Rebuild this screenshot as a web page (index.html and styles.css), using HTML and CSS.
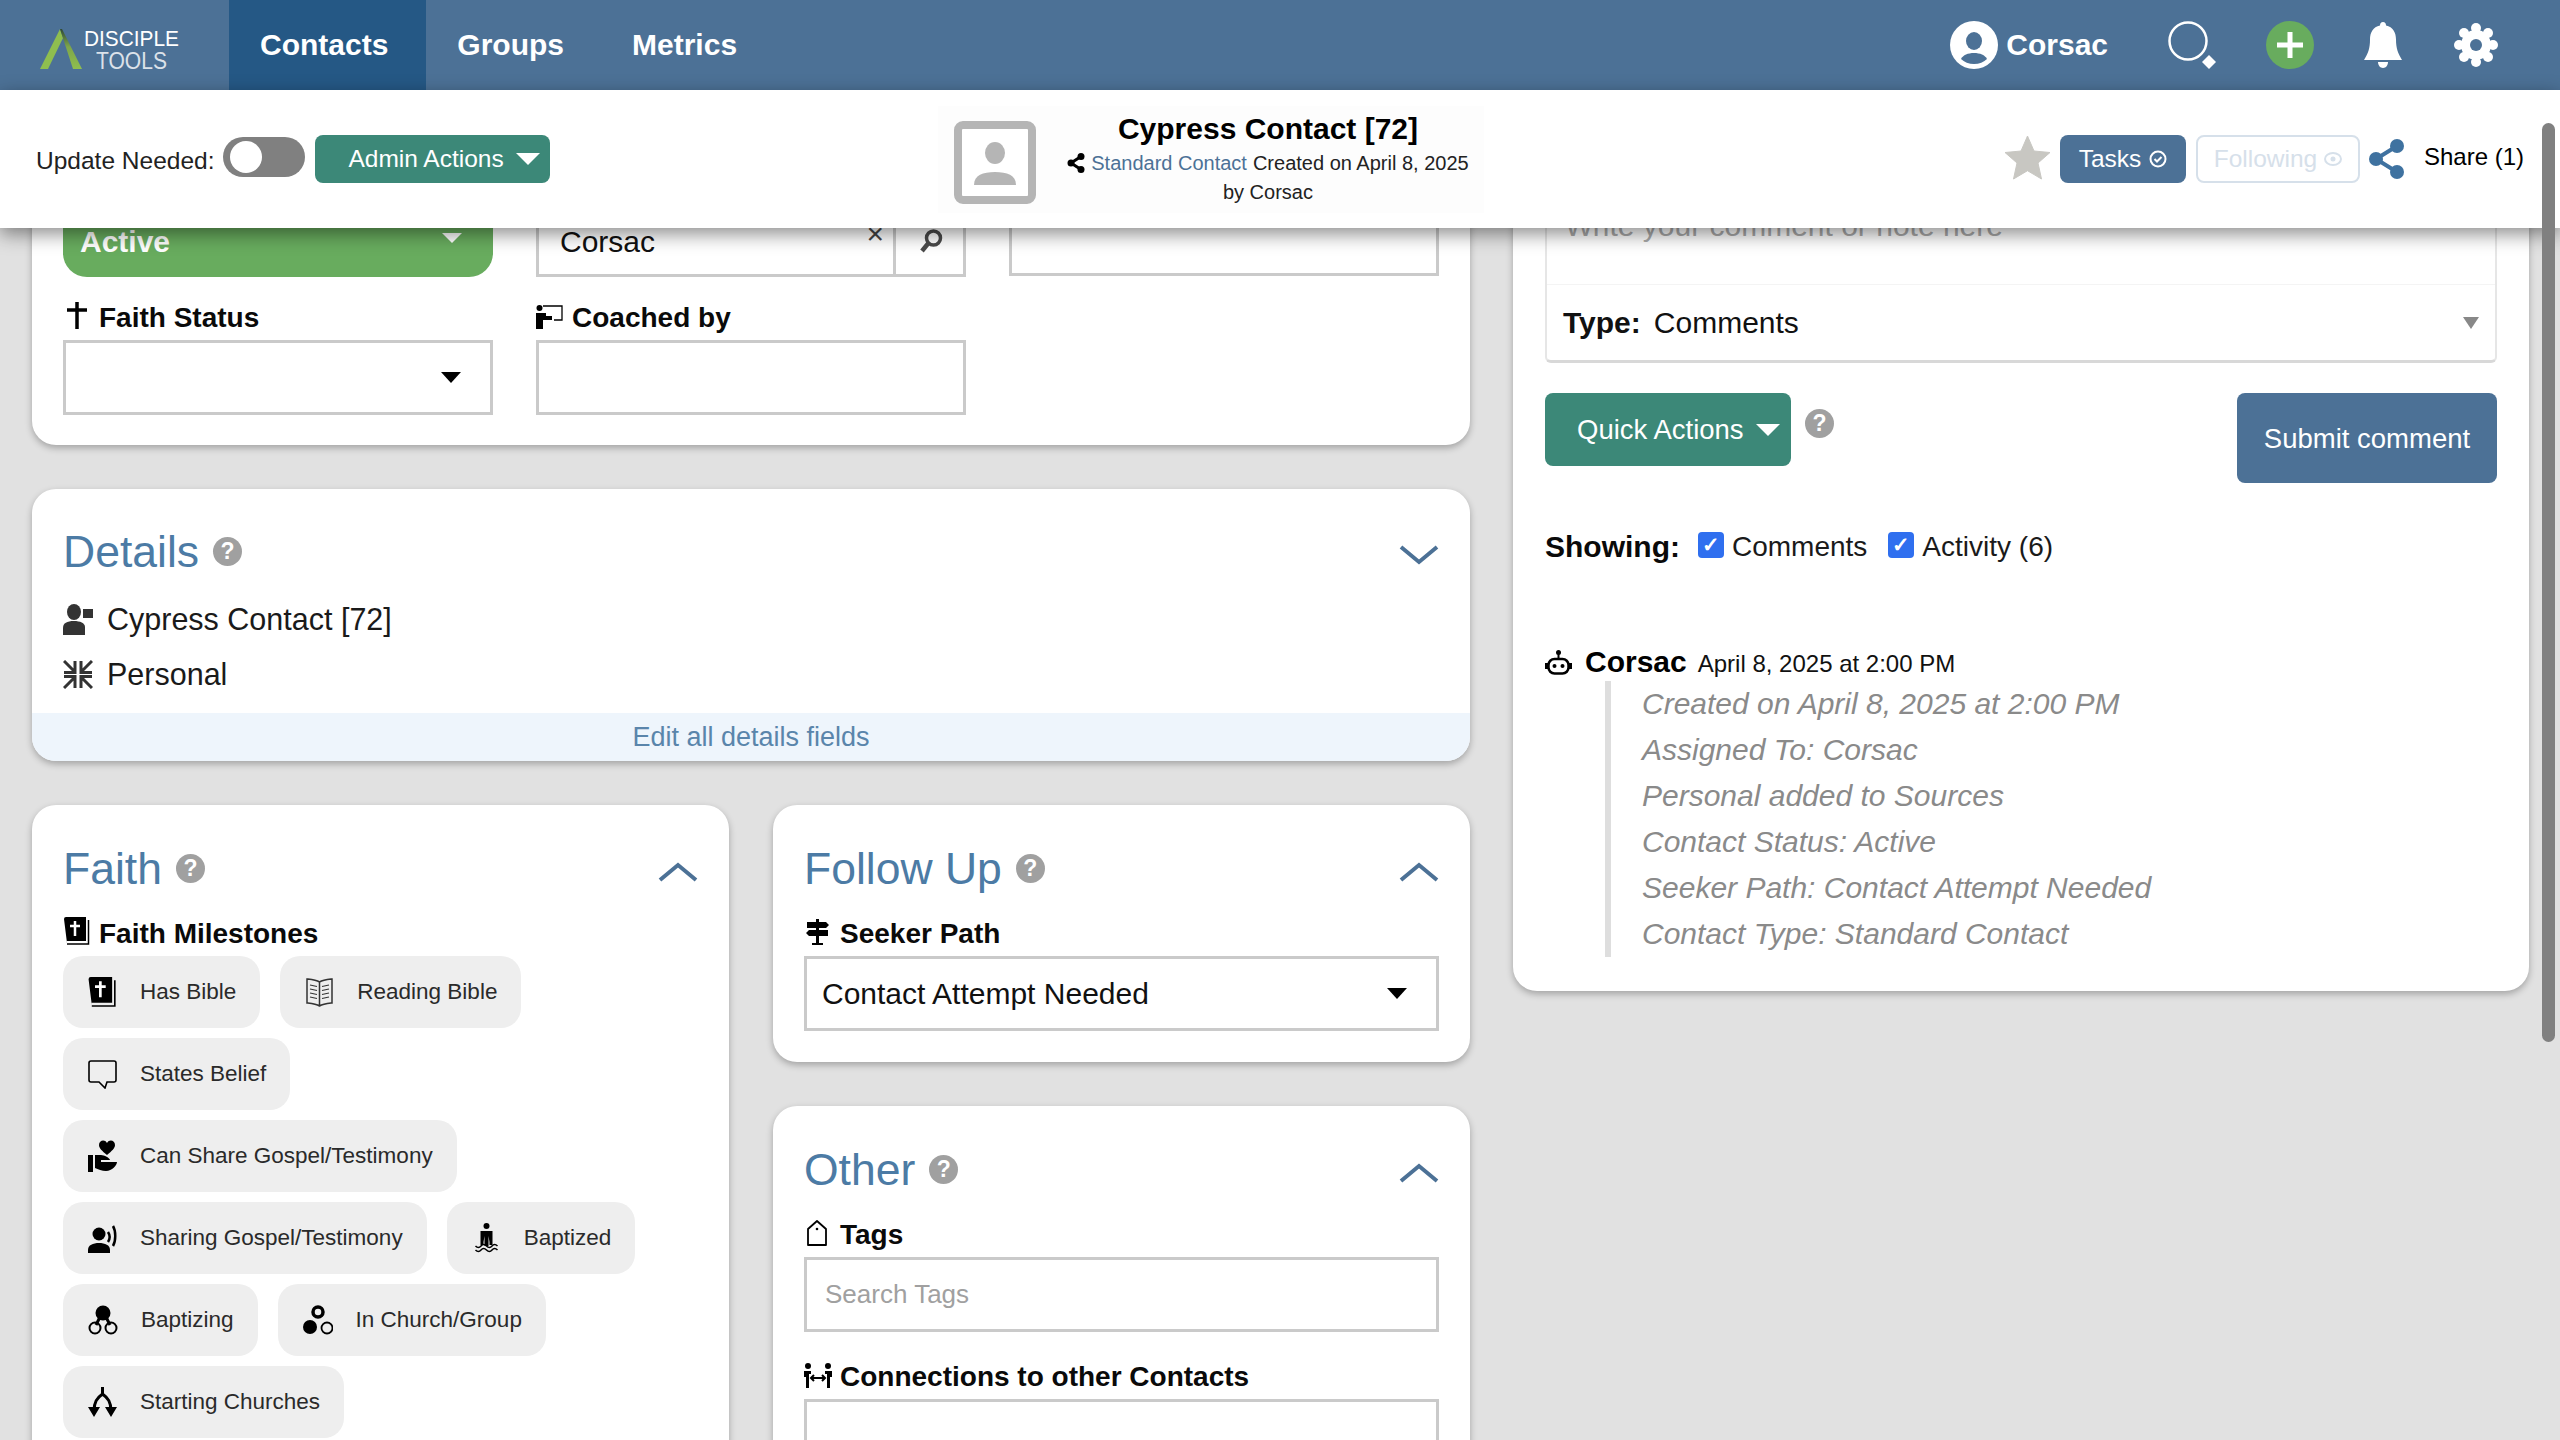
FILE: index.html
```html
<!DOCTYPE html>
<html lang="en">
<head>
  <meta charset="UTF-8" />
  <title>Cypress Contact [72] - Disciple Tools</title>
  <link rel="stylesheet" href="styles.css">
</head>
<body>
<div class="page">

  <!-- Top navigation -->
  <header class="topbar">
    <a class="logo">
      <svg width="150" height="50" viewBox="0 0 150 50">
        <defs>
          <linearGradient id="logo-leg" x1="0" y1="0" x2="0" y2="1">
            <stop offset="0" stop-color="#2f4a35"/>
            <stop offset=".45" stop-color="#7ea64a"/>
            <stop offset="1" stop-color="#8fbe4f"/>
          </linearGradient>
        </defs>
        <polygon points="20,0 0,40 8,40 23,9" fill="#8fbe4f"/>
        <polygon points="20,0 33,40 42,40 22,0" fill="url(#logo-leg)"/>
        <text x="44" y="17" textLength="95" lengthAdjust="spacingAndGlyphs" class="logo-top">DISCIPLE</text>
        <text x="56" y="40" textLength="71" lengthAdjust="spacingAndGlyphs" class="logo-bottom">TOOLS</text>
      </svg>
    </a>
    <nav class="tabs">
      <a class="tab tab-active">Contacts</a>
      <a class="tab">Groups</a>
      <a class="tab">Metrics</a>
    </nav>
    <div class="top-tools">
      <span class="user">
        <svg width="48" height="48" viewBox="0 0 48 48">
          <circle cx="24" cy="24" r="24" fill="#fff"/>
          <ellipse cx="24" cy="20" rx="8" ry="9" fill="#4c7196"/>
          <path d="M11 38c2-4 7-6 13-6s11 2 13 6c-3 3-8 5-13 5s-10-2-13-5z" fill="#4c7196"/>
        </svg>
        <span class="user-name">Corsac</span>
      </span>
      <svg class="tool-search" width="48" height="48" viewBox="0 0 48 48">
        <circle cx="20" cy="20" r="18.500" fill="none" stroke="#fff" stroke-width="2.500"/>
        <polygon points="41,34 48,41 41,48 34,41" fill="#fff"/>
      </svg>
      <svg class="tool-plus" width="48" height="48" viewBox="0 0 48 48">
        <circle cx="24" cy="24" r="24" fill="#68ac5e"/>
        <path d="M24 11v26M11 24h26" stroke="#fff" stroke-width="5"/>
      </svg>
      <svg class="tool-bell" width="38" height="46" viewBox="0 0 38 46">
        <path d="M19 0c2 0 3 1.500 3 3.500 7 1.500 10 7 10 14 0 9 2 14 6 20.500H0c4-6.500 6-11.500 6-20.500 0-7 3-12.500 10-14C16 1.500 17 0 19 0z" fill="#fff"/>
        <path d="M14 40h10c0 3-2 6-5 6s-5-3-5-6z" fill="#fff"/>
      </svg>
      <svg class="tool-gear" width="44" height="44" viewBox="0 0 44 44" fill="#fff">
        <circle cx="22" cy="22" r="15"/>
        <circle cx="22" cy="5" r="5"/><circle cx="22" cy="39" r="5"/>
        <circle cx="5" cy="22" r="5"/><circle cx="39" cy="22" r="5"/>
        <circle cx="10" cy="10" r="5"/><circle cx="34" cy="10" r="5"/>
        <circle cx="10" cy="34" r="5"/><circle cx="34" cy="34" r="5"/>
        <circle cx="22" cy="22" r="6" fill="#4c7196"/>
      </svg>
    </div>
  </header>

  <!-- Record bar -->
  <section class="recordbar">
    <div class="record-left">
      <span class="update-label">Update Needed:</span>
      <span class="toggle"><span class="toggle-knob"></span></span>
      <button class="btn btn-teal btn-admin">Admin Actions <i class="caret caret-white"></i></button>
    </div>
    <div class="record-title">
      <svg class="record-avatar" width="82" height="83" viewBox="0 0 82 83">
        <rect x="4" y="4" width="74" height="75" rx="5" fill="#fff" stroke="#b5b5b5" stroke-width="8"/>
        <ellipse cx="41" cy="32" rx="10" ry="11" fill="#b5b5b5"/>
        <path d="M20 64c0-10 9-13 21-13s21 3 21 13z" fill="#b5b5b5"/>
      </svg>
      <div class="record-text">
        <h1>Cypress Contact [72]</h1>
        <p class="record-sub">
          <svg width="18" height="20" viewBox="0 0 18 20"><path d="M14 3.500 4 10l10 6.500" fill="none" stroke="#000" stroke-width="3"/><circle cx="14" cy="3.500" r="3.500"/><circle cx="4" cy="10" r="3.500"/><circle cx="14" cy="16.500" r="3.500"/></svg>
          <a class="type-link">Standard Contact</a>
          <span>Created on April 8, 2025</span>
        </p>
        <p class="record-by">by Corsac</p>
      </div>
    </div>
    <div class="record-right">
      <svg class="star" width="45" height="45" viewBox="0 0 45 45"><path d="M22.500 0l6.500 15 16 1.500-12 10.500 3.500 16-14-8.300-14 8.300 3.500-16L0 16.500 16 15z" fill="#c8c7c2" stroke="#c8c7c2" stroke-linejoin="round"/></svg>
      <button class="btn btn-blue btn-tasks">Tasks
        <svg width="18" height="18" viewBox="0 0 18 18"><circle cx="9" cy="9" r="7.500" fill="none" stroke="#fff" stroke-width="2"/><path d="M5.500 9l2.500 2.500 4.500-4.500" fill="none" stroke="#fff" stroke-width="2"/></svg>
      </button>
      <button class="btn btn-following">Following
        <svg width="18" height="14" viewBox="0 0 18 14"><ellipse cx="9" cy="7" rx="8" ry="6" fill="none" stroke="#d6e0ea" stroke-width="2"/><circle cx="9" cy="7" r="2.500" fill="#d6e0ea"/></svg>
      </button>
      <svg class="share-icon" width="35" height="40" viewBox="0 0 35 40"><path d="M28 7 7 20l21 13" fill="none" stroke="#3f72a0" stroke-width="4"/><circle cx="28" cy="7" r="7" fill="#3f72a0"/><circle cx="7" cy="20" r="7" fill="#3f72a0"/><circle cx="28" cy="33" r="7" fill="#3f72a0"/></svg>
      <span class="share-label">Share (1)</span>
    </div>
  </section>

  <!-- Page body, scrolled down a little -->
  <main class="content">
    <div class="content-inner">
      <div class="col-main">

        <section class="card card-status">
          <div class="field-grid">
            <div class="select select-active"><span>Active</span><i class="caret caret-white-small"></i></div>
            <div class="assign">
              <span class="assign-value">Corsac</span>
              <span class="assign-x">×</span>
              <span class="assign-search">
                <svg width="24" height="24" viewBox="0 0 24 24"><circle cx="14.500" cy="9" r="7" fill="none" stroke="#4a4a4a" stroke-width="3.500"/><path d="M9.500 14 3 22" stroke="#4a4a4a" stroke-width="4.500"/></svg>
              </span>
            </div>
            <div class="input"></div>

            <div>
              <label class="field-label field-label-first">
                <svg class="label-icon icon-cross" width="20" height="27" viewBox="0 0 20 27"><path d="M10 0v27M0 8h20" stroke="#000" stroke-width="3.500"/></svg>
                Faith Status
              </label>
              <div class="select"><i class="caret caret-black"></i></div>
            </div>
            <div>
              <label class="field-label field-label-first">
                <svg class="label-icon icon-coach" width="27" height="24" viewBox="0 0 27 24"><circle cx="3.500" cy="3" r="3"/><path d="M0 8h10v3h6v4H7v9H0z"/><path d="M7 1h19v14H18" fill="none" stroke="#000" stroke-width="1.300"/></svg>
                Coached by
              </label>
              <div class="input"></div>
            </div>
          </div>
        </section>

        <section class="card card-details">
          <div class="card-head">
            <h2>Details <span class="help">?</span></h2>
            <svg class="chevron" width="40" height="22" viewBox="0 0 40 22"><path d="M2 3l18 15L38 3" fill="none" stroke="#4c7196" stroke-width="4"/></svg>
          </div>
          <div class="detail-row">
            <svg width="30" height="31" viewBox="0 0 30 31" fill="#333"><ellipse cx="11" cy="8" rx="7" ry="8"/><rect x="20" y="5" width="10" height="9"/><path d="M0 31v-7c0-5 4-7 11-7 6 0 11 2 11 6v8z"/></svg>
            <span>Cypress Contact [72]</span>
          </div>
          <div class="detail-row">
            <svg width="30" height="29" viewBox="0 0 30 29" fill="none" stroke="#333" stroke-width="3"><path d="M1 1l10 10M12 1v11.500H1M29 1 19 11M18 1v11.500h11M1 28l10-10M12 28V16.500H1M29 28 19 18M18 28V16.500h11"/></svg>
            <span>Personal</span>
          </div>
          <a class="edit-band">Edit all details fields</a>
        </section>

        <div class="split">
          <section class="card card-faith">
            <div class="card-head">
              <h2>Faith <span class="help">?</span></h2>
              <svg class="chevron" width="40" height="22" viewBox="0 0 40 22"><path d="M2 19 20 4l18 15" fill="none" stroke="#4c7196" stroke-width="4"/></svg>
            </div>
            <label class="field-label">
              <svg class="label-icon icon-bible" width="26" height="28" viewBox="0 0 26 28"><path d="M0 2a2 2 0 0 1 2-2h20v24H3a2 2 0 0 0 0 2" fill="#000"/><path d="M24.500 3v24H3" fill="none" stroke="#000" stroke-width="1.500"/><path d="M11 4v15M6 9h10" stroke="#fff" stroke-width="2.500"/></svg>
              Faith Milestones
            </label>
            <div class="chips">
              <button class="chip">
                <svg width="29" height="30" viewBox="0 0 26 28"><path d="M0 2a2 2 0 0 1 2-2h20v24H3a2 2 0 0 0 0 2" fill="#000"/><path d="M24.500 3v24H3" fill="none" stroke="#000" stroke-width="1.500"/><path d="M11 4v15M6 9h10" stroke="#fff" stroke-width="2.500"/></svg>
                Has Bible
              </button>
              <button class="chip">
                <svg width="29" height="30" viewBox="0 0 29 30" fill="none" stroke="#333" stroke-width="1.500"><path d="M14.500 5C11 3 6 2.500 2 2v24c4 .5 9 1 12.500 3 3.500-2 8.500-2.500 12.500-3V2c-4 .5-9 1-12.500 3zM14.500 5v24"/><path d="M5 8l7 1.500M5 12l7 1.500M5 16l7 1.500M5 20l7 1.500M24 8l-7 1.500M24 12l-7 1.500M24 16l-7 1.500M24 20l-7 1.500" stroke-width="1.200"/></svg>
                Reading Bible
              </button>
              <button class="chip">
                <svg width="29" height="30" viewBox="0 0 29 30" fill="none" stroke="#000" stroke-width="1.600"><path d="M3 2h23a2 2 0 0 1 2 2v17a2 2 0 0 1-2 2h-7l-2 6-6-6H3a2 2 0 0 1-2-2V4a2 2 0 0 1 2-2z"/></svg>
                States Belief
              </button>
              <button class="chip">
                <svg width="29" height="32" viewBox="0 0 29 32" fill="#000"><path d="M19 15C14 11 11 8 11 5c0-5 6-6 8-2 2-4 8-3 8 2 0 3-3 6-8 10z"/><rect x="0" y="15" width="5" height="17"/><path d="M7 15h6c3 0 9 3 9 5h-9v2h16c0 3-5 9-11 9-4 0-8-2-11-3z"/></svg>
                Can Share Gospel/Testimony
              </button>
              <button class="chip">
                <svg width="29" height="29" viewBox="0 0 29 29" fill="#000"><circle cx="11" cy="10" r="6.500"/><path d="M0 29v-3c0-5 5-7 11-7s11 2 11 7v3z"/><path d="M20 8c2 3 2 7 0 10M25 2c3 5 3 15 0 20" fill="none" stroke="#000" stroke-width="2.500"/></svg>
                Sharing Gospel/Testimony
              </button>
              <button class="chip">
                <svg width="29" height="30" viewBox="-2.500 0 29 30" fill="#000"><circle cx="12" cy="3" r="3"/><path d="M6 8h12v14H15v-3l-1-6v10h-4V13l-1 6v3H6z"/><path d="M1 23q3 3 5.500 0t5.500 0 5.500 0 5.500 0M1 27q3 3 5.500 0t5.500 0 5.500 0 5.500 0" fill="none" stroke="#000" stroke-width="1.500"/></svg>
                Baptized
              </button>
              <button class="chip">
                <svg width="30" height="30" viewBox="0 0 30 30"><circle cx="15" cy="8" r="7.500"/><path d="M12 12 8 20M18 12l4 8" stroke="#000" stroke-width="3"/><circle cx="7" cy="23" r="5.500" fill="none" stroke="#000" stroke-width="2"/><circle cx="23" cy="23" r="5.500" fill="none" stroke="#000" stroke-width="2"/></svg>
                Baptizing
              </button>
              <button class="chip">
                <svg width="30" height="30" viewBox="0 0 30 30"><circle cx="15" cy="7" r="5" fill="none" stroke="#000" stroke-width="3.500"/><circle cx="7" cy="22" r="7"/><circle cx="24" cy="23" r="5.500" fill="none" stroke="#000" stroke-width="1.800"/></svg>
                In Church/Group
              </button>
              <button class="chip">
                <svg width="29" height="30" viewBox="0 0 29 30"><path d="M14.500 0v7M14.500 7C9 11 6 15 6 24M14.500 7C20 11 23 15 23 24" fill="none" stroke="#000" stroke-width="3"/><path d="M0 20h12L6 30zM17 20h12l-6 10z"/></svg>
                Starting Churches
              </button>
            </div>
          </section>

          <div class="col-side">
            <section class="card card-follow">
              <div class="card-head">
                <h2>Follow Up <span class="help">?</span></h2>
                <svg class="chevron" width="40" height="22" viewBox="0 0 40 22"><path d="M2 19 20 4l18 15" fill="none" stroke="#4c7196" stroke-width="4"/></svg>
              </div>
              <label class="field-label">
                <svg class="label-icon icon-sign" width="23" height="26" viewBox="0 0 23 26"><path d="M10 0h3v3h7l3 3-3 3H13v2h9v6H13v7h4v2H6v-2h4v-7H3l-3-3 3-3h7V9H1V3h9z"/></svg>
                Seeker Path
              </label>
              <div class="select"><span>Contact Attempt Needed</span><i class="caret caret-black"></i></div>
            </section>

            <section class="card card-other">
              <div class="card-head">
                <h2>Other <span class="help">?</span></h2>
                <svg class="chevron" width="40" height="22" viewBox="0 0 40 22"><path d="M2 19 20 4l18 15" fill="none" stroke="#4c7196" stroke-width="4"/></svg>
              </div>
              <label class="field-label">
                <svg class="label-icon icon-tag" width="20" height="26" viewBox="0 0 20 26"><path d="M10 1l9 8v16H1V9z" fill="none" stroke="#000" stroke-width="1.800" stroke-linejoin="round"/><circle cx="10" cy="9" r="1.300"/></svg>
                Tags
              </label>
              <div class="input input-search">Search Tags</div>
              <label class="field-label field-label-next">
                <svg class="label-icon" width="28" height="25" viewBox="0 0 28 25"><circle cx="4" cy="3" r="3"/><circle cx="24" cy="3" r="3"/><path d="M0 8h7v3H5v14H2V14H0zM28 8h-7v3h2v14h3V14h2z"/><path d="M7 15h14M10 12l-3 3 3 3M18 12l3 3-3 3" fill="none" stroke="#000" stroke-width="2"/></svg>
                Connections to other Contacts
              </label>
              <div class="input input-tall"></div>
            </section>
          </div>
        </div>
      </div>

      <aside class="col-comments">
        <section class="card card-comments">
          <div class="comment-box">
            <div class="comment-text">Write your comment or note here</div>
            <div class="comment-type">
              <b>Type:</b> <span>Comments</span>
              <i class="caret caret-grey"></i>
            </div>
          </div>
          <div class="comment-actions">
            <div class="quick">
              <button class="btn btn-teal btn-quick">Quick Actions <i class="caret caret-white"></i></button>
              <span class="help help-quick">?</span>
            </div>
            <button class="btn btn-blue btn-submit">Submit comment</button>
          </div>
          <div class="showing">
            <b>Showing:</b>
            <label class="check"><span class="box">✓</span>Comments</label>
            <label class="check"><span class="box">✓</span>Activity (6)</label>
          </div>
          <div class="activity-head">
            <svg width="27" height="25" viewBox="0 0 27 25"><circle cx="13.500" cy="2.500" r="2.500"/><path d="M13.500 4v5" stroke="#000" stroke-width="2"/><rect x="3.500" y="9" width="20" height="14.500" rx="6" fill="none" stroke="#000" stroke-width="2.500"/><circle cx="9.500" cy="16" r="2"/><circle cx="17.500" cy="16" r="2"/><path d="M3 13H0v6h3M24 13h3v6h-3" fill="#000"/></svg>
            <b>Corsac</b>
            <span class="activity-date">April 8, 2025 at 2:00 PM</span>
          </div>
          <div class="activity-lines">
            <p>Created on April 8, 2025 at 2:00 PM</p>
            <p>Assigned To: Corsac</p>
            <p>Personal added to Sources</p>
            <p>Contact Status: Active</p>
            <p>Seeker Path: Contact Attempt Needed</p>
            <p>Contact Type: Standard Contact</p>
          </div>
        </section>
      </aside>
    </div>
  </main>

  <div class="scroll-thumb"></div>
</div>
</body>
</html>
```

FILE: styles.css
```css
* {
  box-sizing: border-box;
}

html, body {
  margin: 0;
  height: 100%;
  overflow: hidden;
}

body {
  font-family: "Liberation Sans", Arial, sans-serif;
  background: #e1e1e1;
  color: #111;
}

h1, h2, p {
  margin: 0;
}

button {
  font-family: inherit;
  border: none;
}

svg {
  flex: none;
  display: block;
}

.page {
  position: relative;
  height: 1440px;
  display: flex;
  flex-direction: column;
  overflow: hidden;
}

/* Top navigation */
.topbar {
  flex: none;
  height: 90px;
  display: flex;
  background: #4c7196;
  color: #fff;
}

.logo {
  width: 229px;
  padding: 29px 0 0 40px;
}

.logo-top {
  font-size: 22.500px;
  fill: #fff;
}

.logo-bottom {
  font-size: 24px;
  fill: #fff;
  opacity: .8;
}

.tabs {
  display: flex;
}

.tab {
  padding: 0 37px 0 31px;
  line-height: 90px;
  font-size: 30px;
  font-weight: 700;
}

.tab-active {
  padding-right: 38px;
  background: #255885;
}

.top-tools {
  margin-left: auto;
  padding-right: 62px;
  display: flex;
  align-items: center;
}

.user {
  display: flex;
  align-items: center;
  gap: 8px;
}

.user-name {
  font-size: 30px;
  font-weight: 700;
}

.tool-search {
  margin-left: 60px;
}

.tool-plus {
  margin-left: 50px;
}

.tool-bell {
  margin-left: 50px;
}

.tool-gear {
  margin-left: 52px;
}

/* Record bar */
.recordbar {
  position: relative;
  z-index: 2;
  flex: none;
  height: 138px;
  display: flex;
  align-items: center;
  background: #fff;
  box-shadow: 0 6px 18px rgba(0, 0, 0, .45);
}

.record-left {
  display: flex;
  align-items: center;
  padding-left: 36px;
}

.update-label {
  font-size: 24.500px;
  color: #222;
  padding-top: 3px;
}

.toggle {
  width: 82px;
  height: 40px;
  margin: -4px 0 0 9px;
  padding: 4px 7px;
  border-radius: 20px;
  background: #808080;
}

.toggle-knob {
  display: block;
  width: 32px;
  height: 32px;
  border-radius: 50%;
  background: #fff;
}

.btn {
  border-radius: 8px;
  color: #fff;
  display: flex;
  align-items: center;
  justify-content: center;
}

.btn-teal {
  background: #3c8878;
}

.btn-blue {
  background: #4c7196;
}

.btn-admin {
  width: 235px;
  height: 48px;
  margin: -1px 0 0 10px;
  padding: 0 0 0 33px;
  justify-content: flex-start;
  font-size: 24.500px;
  gap: 12px;
}

.caret {
  display: block;
  width: 0;
  height: 0;
  border-style: solid;
  border-color: transparent;
  border-bottom-width: 0;
}

.caret-white {
  border-width: 12px 12px 0;
  border-top-color: #fff;
}

.caret-white-small {
  border-width: 10px 10px 0;
  border-top-color: #fff;
}

.caret-black {
  border-width: 11px 10px 0;
  border-top-color: #000;
}

.caret-grey {
  border-width: 12px 8px 0;
  border-top-color: #888;
}

.select .caret,
.comment-type .caret {
  margin-left: auto;
}

.record-title {
  margin-left: 388px;
  width: 546px;
  height: 107px;
  padding: 0 14px 0 16px;
  display: flex;
  align-items: center;
  background: #fdfdfd;
}

.record-avatar {
  margin: 7px 29px 0 0;
}

.record-text {
  flex: 1;
  text-align: center;
}

.record-text h1 {
  margin-top: -2px;
  font-size: 30px;
  line-height: 38px;
  font-weight: 700;
  color: #000;
}

.record-sub {
  display: flex;
  justify-content: center;
  align-items: center;
  gap: 6px;
  font-size: 20px;
  line-height: 30px;
  color: #222;
}

.record-by {
  font-size: 20px;
  line-height: 28px;
  color: #222;
}

.type-link {
  color: #4c7196;
}

.record-right {
  margin-left: auto;
  padding-right: 36px;
  display: flex;
  align-items: center;
}

.star {
  margin-top: -2px;
}

.btn-tasks {
  width: 126px;
  height: 48px;
  margin: 0 0 0 10px;
  font-size: 24.500px;
  gap: 8px;
}

.btn-following {
  width: 164px;
  height: 48px;
  margin: 0 0 0 10px;
  font-size: 24.500px;
  gap: 7px;
  background: #fff;
  color: #d6e0ea;
  border: 2px solid #d6e0ea;
}

.share-icon {
  margin-left: 9px;
}

.share-label {
  margin: -4px 0 0 20px;
  font-size: 24px;
  color: #000;
}

/* Body */
.content {
  flex: 1;
  overflow: hidden;
}

.content-inner {
  margin-top: -80px;
  padding: 0 32px;
  display: grid;
  grid-template-columns: 1438px 1016px;
  gap: 43px;
  align-items: start;
}

.card {
  position: relative;
  background: #fff;
  border-radius: 24px;
  box-shadow: 0 3px 7px rgba(0, 0, 0, .28);
}

.col-main {
  display: flex;
  flex-direction: column;
  gap: 44px;
}

.split {
  display: grid;
  grid-template-columns: 697px 697px;
  gap: 44px;
  align-items: start;
}

.col-side {
  display: flex;
  flex-direction: column;
  gap: 44px;
}

.card-status {
  padding: 53px 31px 30px;
}

.field-grid {
  display: grid;
  grid-template-columns: repeat(3, 1fr);
  column-gap: 43px;
}

.card-details {
  padding: 36px 31px 0;
  overflow: hidden;
}

.card-faith,
.card-follow,
.card-other {
  padding: 37px 31px 31px;
}

.card-faith {
  height: 900px;
}

.card-other {
  height: 600px;
}

.card-head {
  display: flex;
  justify-content: space-between;
  align-items: center;
}

.card-head h2 {
  display: flex;
  align-items: center;
  gap: 14px;
  font-size: 44.500px;
  line-height: 53px;
  font-weight: 400;
  color: #4c7ba5;
}

.help {
  display: block;
  width: 29px;
  height: 29px;
  border-radius: 50%;
  background: #a0a0a0;
  color: #fff;
  font-size: 23px;
  line-height: 29px;
  font-weight: 700;
  text-align: center;
}

.chevron {
  margin-top: 6px;
}

.field-label {
  display: flex;
  align-items: flex-end;
  height: 61px;
  padding-bottom: 5px;
  font-size: 28px;
  line-height: 34px;
  font-weight: 700;
  color: #0a0a0a;
}

.label-icon {
  margin: 0 8px 6px 0;
}

.icon-cross {
  margin: 0 12px 6px 4px;
}

.icon-coach,
.icon-bible {
  margin-right: 9px;
}

.icon-bible {
  margin-left: 1px;
}

.icon-sign {
  margin: 0 11px 6px 2px;
}

.icon-tag {
  margin: 0 13px 6px 3px;
}

.field-label-first {
  height: 63px;
}

.field-label-next {
  height: 67px;
}

.select,
.input,
.assign {
  border: 3px solid #cacaca;
  background: #fff;
  height: 75px;
}

.select {
  display: flex;
  align-items: center;
  padding: 0 29px 0 15px;
  font-size: 30px;
  color: #111;
}

.select-active {
  height: 76px;
  padding: 6px 31px 0 17px;
  border: none;
  border-radius: 0 0 24px 24px;
  background: #68ac5e;
  color: #fff;
  font-weight: 700;
}

.select-active .caret {
  margin-top: -8px;
}

.assign {
  display: flex;
  align-items: center;
  height: 76px;
  border-top: none;
  font-size: 30px;
}

.assign-value {
  flex: 1;
  padding: 8px 0 0 21px;
  color: #111;
}

.assign-x {
  margin: -8px 9px 0 0;
  font-size: 30px;
  line-height: 32px;
  color: #444;
}

.assign-search {
  align-self: stretch;
  width: 70px;
  padding: 28px 0 0 23px;
  border-left: 3px solid #cacaca;
}

.input-search {
  display: flex;
  align-items: center;
  padding-left: 18px;
  font-size: 26px;
  color: #a0a0a0;
}

.input-tall {
  height: 120px;
}

.detail-row {
  display: flex;
  align-items: center;
  gap: 14px;
  height: 55px;
  font-size: 30.500px;
  color: #1a1a1a;
}

.card-head + .detail-row {
  margin-top: 14px;
}

.edit-band {
  display: block;
  margin: 11px -31px 0;
  height: 48px;
  background: #eef5fc;
  text-align: center;
  font-size: 27px;
  line-height: 48px;
  color: #5a85ab;
}

.chips {
  display: flex;
  flex-wrap: wrap;
  gap: 10px 20px;
}

.chip {
  display: flex;
  align-items: center;
  gap: 23px;
  height: 72px;
  padding: 0 24px 0 25px;
  border-radius: 20px;
  background: #eee;
  font-size: 22.500px;
  color: #2a2a2a;
}

/* Comments column */
.card-comments {
  padding: 32px 32px 34px;
}

.comment-box {
  border: 2px solid #e6e6e6;
  border-bottom: 3px solid #d8d8d8;
  border-radius: 6px;
}

.comment-text {
  height: 103px;
  padding: 27px 18px 0;
  font-size: 30px;
  color: #aaa;
  border-bottom: 1px solid #f4f4f4;
}

.comment-type {
  height: 75px;
  padding: 0 16px;
  display: flex;
  align-items: center;
  gap: 13px;
  font-size: 30px;
  color: #111;
}

.comment-actions {
  margin-top: 30px;
  display: flex;
  justify-content: space-between;
  align-items: flex-start;
}

.quick {
  display: flex;
  align-items: flex-start;
}

.btn-quick {
  width: 246px;
  height: 73px;
  padding: 0 0 0 32px;
  justify-content: flex-start;
  font-size: 27.500px;
  gap: 12px;
}

.help-quick {
  margin: 16px 0 0 14px;
}

.btn-submit {
  width: 260px;
  height: 90px;
  padding-top: 2px;
  font-size: 27.500px;
}

.showing {
  margin-top: 46px;
  display: flex;
  align-items: center;
  font-size: 30px;
  line-height: 36px;
  color: #0a0a0a;
}

.check {
  display: flex;
  align-items: center;
  margin-left: 18px;
  font-size: 28px;
  color: #1a1a1a;
}

.check + .check {
  margin-left: 21px;
}

.box {
  width: 26px;
  height: 26px;
  margin: -4px 8px 0 0;
  border-radius: 4px;
  background: #2f6fef;
  color: #fff;
  font-size: 21px;
  line-height: 26px;
  font-weight: 700;
  text-align: center;
}

.activity-head {
  margin-top: 80px;
  display: flex;
  align-items: center;
  font-size: 24px;
  color: #111;
}

.activity-head b {
  margin-left: 13px;
  font-size: 30px;
  color: #000;
}

.activity-date {
  margin: 4px 0 0 11px;
}

.activity-lines {
  margin: 2px 0 0 60px;
  border-left: 6px solid #dedede;
  padding-left: 31px;
  font-size: 30px;
  line-height: 46px;
  font-style: italic;
  color: #8a8a8a;
}

/* Scrollbar sits over everything */
.scroll-thumb {
  position: absolute;
  z-index: 3;
  top: 123px;
  left: 2542px;
  width: 13px;
  height: 919px;
  border-radius: 7px;
  background: #808080;
}
```
